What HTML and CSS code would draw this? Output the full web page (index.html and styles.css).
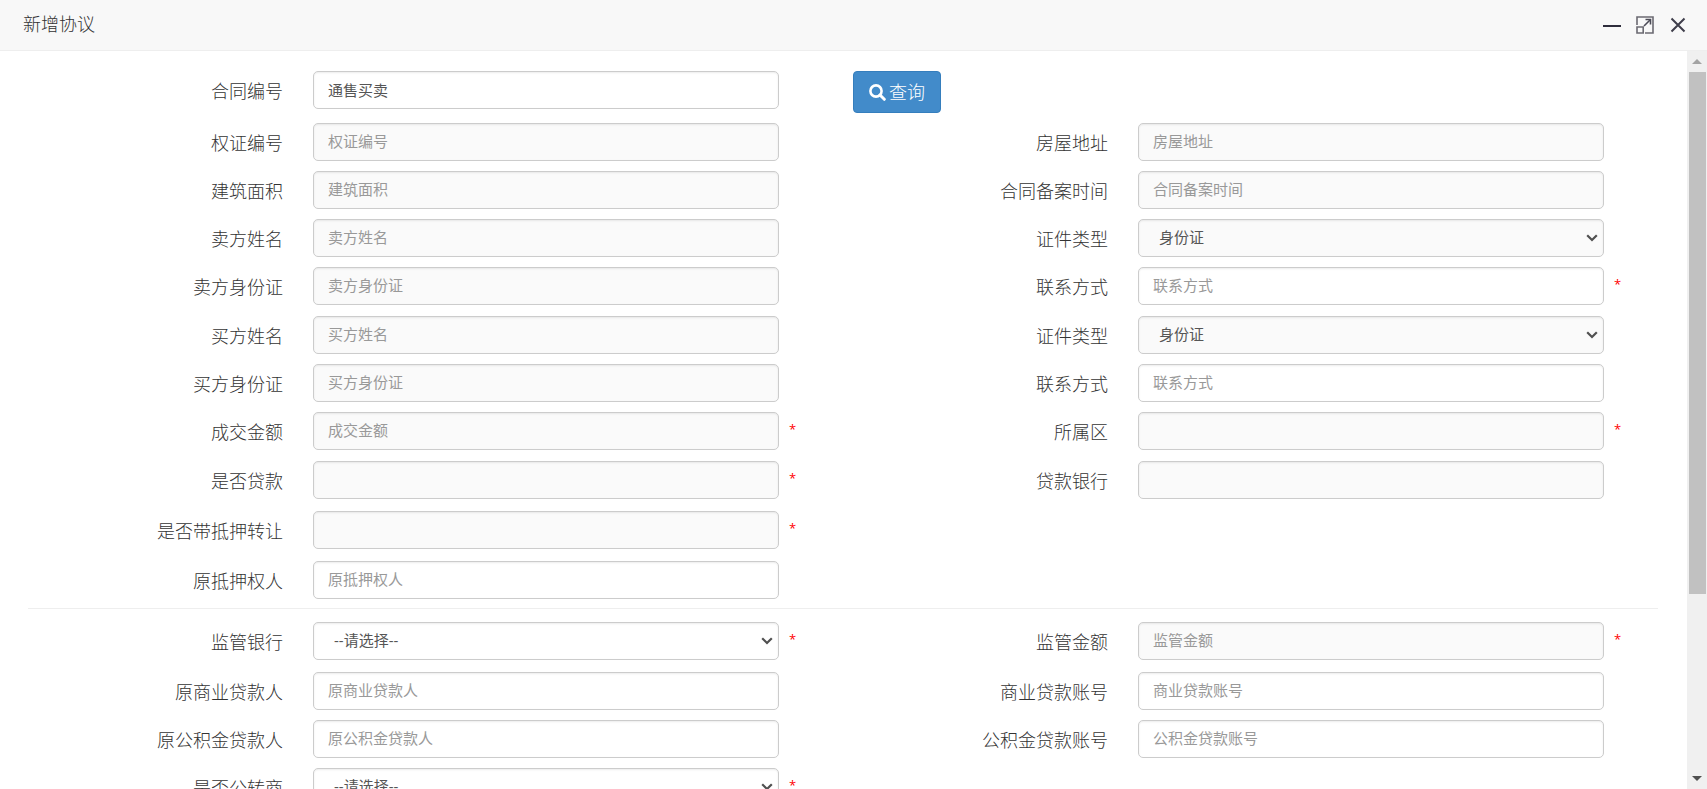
FILE: index.html
```html
<!DOCTYPE html>
<html lang="zh-CN">
<head>
<meta charset="utf-8">
<title>新增协议</title>
<link rel="stylesheet" href="styles.css">
</head>
<body>
<div class="dialog">
  <header class="dialog-header">
    <h1 class="dialog-title">新增协议</h1>
    <div class="window-controls">
      <button type="button" class="window-button" aria-label="最小化">
        <svg width="18" height="18" viewBox="0 0 18 18"><path d="M0 10h18" stroke="#2e2d3c" stroke-width="2"/></svg>
      </button>
      <button type="button" class="window-button" aria-label="最大化">
        <svg width="18" height="18" viewBox="0 0 18 18" fill="none" stroke="#6b6a72" stroke-width="1.6"><path d="M1 9V1h16v16H9M1 11h6.200v6H1z"/><path d="M8 10l6.500-6.500" stroke="#4c4b57"/><path d="M9.500 3.500h5v5" stroke="#4c4b57"/></svg>
      </button>
      <button type="button" class="window-button" aria-label="关闭">
        <svg width="18" height="18" viewBox="0 0 18 18"><path d="M2.500 2.500l13 13M15.500 2.500l-13 13" stroke="#3f3e4b" stroke-width="2"/></svg>
      </button>
    </div>
  </header>
  <div class="dialog-body">
    <form class="form">
      <div class="group">
        <div class="row">
          <div class="field"><label for="contractNo">合同编号</label><input id="contractNo" type="text" value="通售买卖"></div>
          <div class="action"><button type="button" class="search-button"><svg width="17" height="17" viewBox="0 0 17 17" fill="none" stroke="#fff"><circle cx="7" cy="7" r="5.600" stroke-width="2.600"/><path d="M11 11l4.300 4.300" stroke-width="3" stroke-linecap="round"/></svg><span>查询</span></button></div>
        </div>
        <div class="row">
          <div class="field"><label for="warrantNo">权证编号</label><input id="warrantNo" type="text" placeholder="权证编号" readonly></div>
          <div class="field"><label for="address">房屋地址</label><input id="address" type="text" placeholder="房屋地址" readonly></div>
        </div>
        <div class="row">
          <div class="field"><label for="area">建筑面积</label><input id="area" type="text" placeholder="建筑面积" readonly></div>
          <div class="field"><label for="recordTime">合同备案时间</label><input id="recordTime" type="text" placeholder="合同备案时间" readonly></div>
        </div>
        <div class="row">
          <div class="field"><label for="sellerName">卖方姓名</label><input id="sellerName" type="text" placeholder="卖方姓名" readonly></div>
          <div class="field"><label for="sellerIdType">证件类型</label><select id="sellerIdType" disabled><option>身份证</option></select></div>
        </div>
        <div class="row">
          <div class="field"><label for="sellerId">卖方身份证</label><input id="sellerId" type="text" placeholder="卖方身份证" readonly></div>
          <div class="field"><label for="sellerPhone">联系方式</label><input id="sellerPhone" type="text" placeholder="联系方式"><span class="required">*</span></div>
        </div>
      </div>
      <div class="group">
        <div class="row">
          <div class="field"><label for="buyerName">买方姓名</label><input id="buyerName" type="text" placeholder="买方姓名" readonly></div>
          <div class="field"><label for="buyerIdType">证件类型</label><select id="buyerIdType" disabled><option>身份证</option></select></div>
        </div>
        <div class="row">
          <div class="field"><label for="buyerId">买方身份证</label><input id="buyerId" type="text" placeholder="买方身份证" readonly></div>
          <div class="field"><label for="buyerPhone">联系方式</label><input id="buyerPhone" type="text" placeholder="联系方式"></div>
        </div>
        <div class="row">
          <div class="field"><label for="amount">成交金额</label><input id="amount" type="text" placeholder="成交金额" readonly><span class="required">*</span></div>
          <div class="field"><label for="district">所属区</label><input id="district" type="text" readonly><span class="required">*</span></div>
        </div>
      </div>
      <div class="group group-loose">
        <div class="row">
          <div class="field"><label for="hasLoan">是否贷款</label><input id="hasLoan" type="text" readonly><span class="required">*</span></div>
          <div class="field"><label for="loanBank">贷款银行</label><input id="loanBank" type="text" readonly></div>
        </div>
        <div class="row">
          <div class="field"><label for="withMortgage">是否带抵押转让</label><input id="withMortgage" type="text" readonly><span class="required">*</span></div>
        </div>
        <div class="row">
          <div class="field"><label for="mortgagee">原抵押权人</label><input id="mortgagee" type="text" placeholder="原抵押权人"></div>
        </div>
      </div>
      <hr class="divider">
      <div class="group group-loose">
        <div class="row">
          <div class="field"><label for="superviseBank">监管银行</label><select id="superviseBank"><option>--请选择--</option></select><span class="required">*</span></div>
          <div class="field"><label for="superviseAmount">监管金额</label><input id="superviseAmount" type="text" placeholder="监管金额" readonly><span class="required">*</span></div>
        </div>
      </div>
      <div class="group">
        <div class="row">
          <div class="field"><label for="bizBorrower">原商业贷款人</label><input id="bizBorrower" type="text" placeholder="原商业贷款人"></div>
          <div class="field"><label for="bizAccount">商业贷款账号</label><input id="bizAccount" type="text" placeholder="商业贷款账号"></div>
        </div>
        <div class="row">
          <div class="field"><label for="fundBorrower">原公积金贷款人</label><input id="fundBorrower" type="text" placeholder="原公积金贷款人"></div>
          <div class="field"><label for="fundAccount">公积金贷款账号</label><input id="fundAccount" type="text" placeholder="公积金贷款账号"></div>
        </div>
        <div class="row">
          <div class="field"><label for="fundToBiz">是否公转商</label><select id="fundToBiz"><option>--请选择--</option></select><span class="required">*</span></div>
        </div>
      </div>
    </form>
    <div class="scrollbar" aria-hidden="true">
      <div class="scroll-arrow"><svg width="10" height="5" viewBox="0 0 10 5"><path d="M0 5l5-5 5 5z" fill="#a3a3a3"/></svg></div>
      <div class="scroll-track"><div class="scroll-thumb"></div></div>
      <div class="scroll-arrow"><svg width="10" height="5" viewBox="0 0 10 5"><path d="M0 0l5 5 5-5z" fill="#505050"/></svg></div>
    </div>
  </div>
</div>
</body>
</html>
```
FILE: styles.css
```css
* {
  box-sizing: border-box;
}

body {
  margin: 0;
  background: #fff;
  color: #333;
  font-family: "Open Sans", "Noto Sans CJK SC", sans-serif;
}

input,
select,
button {
  font-family: inherit;
}

.dialog {
  display: flex;
  flex-direction: column;
  height: 100vh;
  overflow: hidden;
}

.dialog-header {
  display: flex;
  flex: none;
  justify-content: space-between;
  padding: 0 20px 0 23px;
  background: #f8f8f8;
  border-bottom: 1px solid #eee;
}

.dialog-title {
  margin: 0;
  padding-bottom: 2px;
  font-size: 18px;
  font-weight: 300;
  line-height: 48px;
}

.window-controls {
  display: flex;
  align-items: center;
  gap: 15px;
}

.window-button {
  display: block;
  padding: 0;
  border: 0;
  background: none;
}

.window-button svg {
  display: block;
}

.dialog-body {
  display: flex;
  flex: 1;
  min-height: 0;
}

.form {
  flex: 1;
  padding: 20px 19px 0 18px;
  overflow: hidden;
}

.group {
  display: grid;
  gap: 10px;
  margin-bottom: 11px;
}

.group-loose {
  gap: 12px;
  margin-bottom: 12px;
}

.row {
  display: grid;
  grid-template-columns: 1fr 1fr;
}

.field {
  display: grid;
  grid-template-columns: 295fr 466fr 64fr;
  align-items: start;
}

.field label {
  padding: 3px 30px 0 0;
  font-size: 18px;
  font-weight: 300;
  line-height: 35px;
  text-align: right;
  white-space: nowrap;
}

.field input,
.field select {
  width: 100%;
  height: 38px;
  margin: 0;
  padding: 0 15px 2px 14px;
  border: 1px solid #ccc;
  border-radius: 5px;
  background-color: #fff;
  box-shadow: inset 0 1px 2px rgba(0, 0, 0, 0.08);
  color: #555;
  font-size: 15px;
  font-weight: 400;
  opacity: 1;
}

.field select {
  padding: 0 20px 2px 20px;
  appearance: none;
  background-image: url("data:image/svg+xml,%3Csvg xmlns='http://www.w3.org/2000/svg' width='12' height='8' viewBox='0 0 12 8'%3E%3Cpath d='M1.200 1.200L6 6l4.800-4.800' fill='none' stroke='%23505050' stroke-width='2.200'/%3E%3C/svg%3E");
  background-position: right 5px center;
  background-repeat: no-repeat;
}

.field input:read-only,
.field select:disabled {
  background-color: #fafafa;
}

.field input::placeholder {
  color: #999;
}

.required {
  padding-left: 10px;
  color: #f00;
  font-size: 13px;
  line-height: 34px;
}

.action {
  padding-left: 10px;
}

.search-button {
  display: flex;
  align-items: center;
  gap: 3px;
  height: 42px;
  padding: 0 15px;
  border: 1px solid #357ebd;
  border-radius: 4px;
  background: #428bca;
  color: #fff;
  font-size: 18px;
  font-weight: 300;
}

.search-button span {
  padding-bottom: 3px;
}

.divider {
  height: 1px;
  margin: -3px 10px 13px;
  border: 0;
  background: #eee;
}

.scrollbar {
  display: flex;
  flex: none;
  flex-direction: column;
  width: 20px;
  background: #f0f0f0;
}

.scroll-arrow {
  display: flex;
  flex: none;
  align-items: center;
  justify-content: center;
  height: 21px;
}

.scroll-track {
  flex: 1;
  padding: 0 1px 0 2px;
}

.scroll-thumb {
  height: 75%;
  background: #c1c1c1;
}
```
